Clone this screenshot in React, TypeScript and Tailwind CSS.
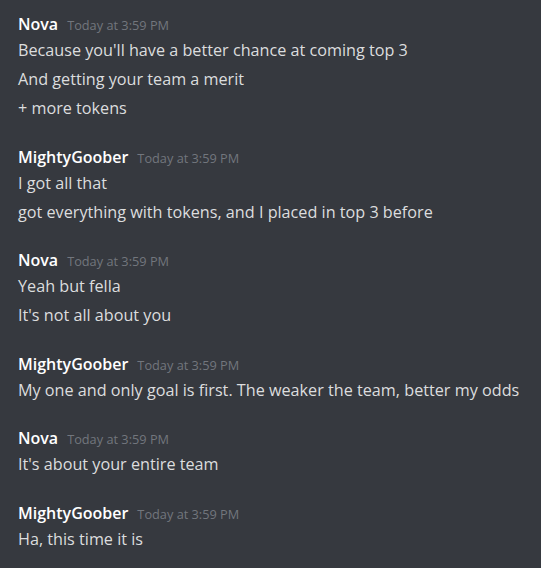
const groups = [
  {
    name: 'Nova',
    lines: [
      "Because you'll have a better chance at coming top 3",
      'And getting your team a merit',
      '+ more tokens',
    ],
  },
  {
    name: 'MightyGoober',
    lines: ['I got all that', 'got everything with tokens, and I placed in top 3 before'],
  },
  { name: 'Nova', lines: ['Yeah but fella', "It's not all about you"] },
  {
    name: 'MightyGoober',
    lines: ['My one and only goal is first. The weaker the team, better my odds'],
  },
  { name: 'Nova', lines: ["It's about your entire team"] },
  { name: 'MightyGoober', lines: ['Ha, this time it is'] },
];

const App = () => {
  return (
    <div className="w-[541px] h-[568px] overflow-hidden bg-[#36393f] pt-[13px] pl-[18px] font-['Open_Sans',sans-serif]">
      <div className="flex flex-col gap-[23.5px]">
        {groups.map((g, i) => (
          <div key={i}>
            <div className="flex items-baseline h-[22px] leading-[22px]">
              <span className="text-[16px] font-semibold text-white">{g.name}</span>
              <span className="ml-[9px] text-[12.75px] text-[#72767d]">Today at 3:59 PM</span>
            </div>
            {g.lines.map((l, j) => (
              <div key={j} className="h-[29px] leading-[31px] text-[16.2px] text-[#dcddde] whitespace-nowrap">
                {l}
              </div>
            ))}
          </div>
        ))}
      </div>
    </div>
  );
};

export default App;
